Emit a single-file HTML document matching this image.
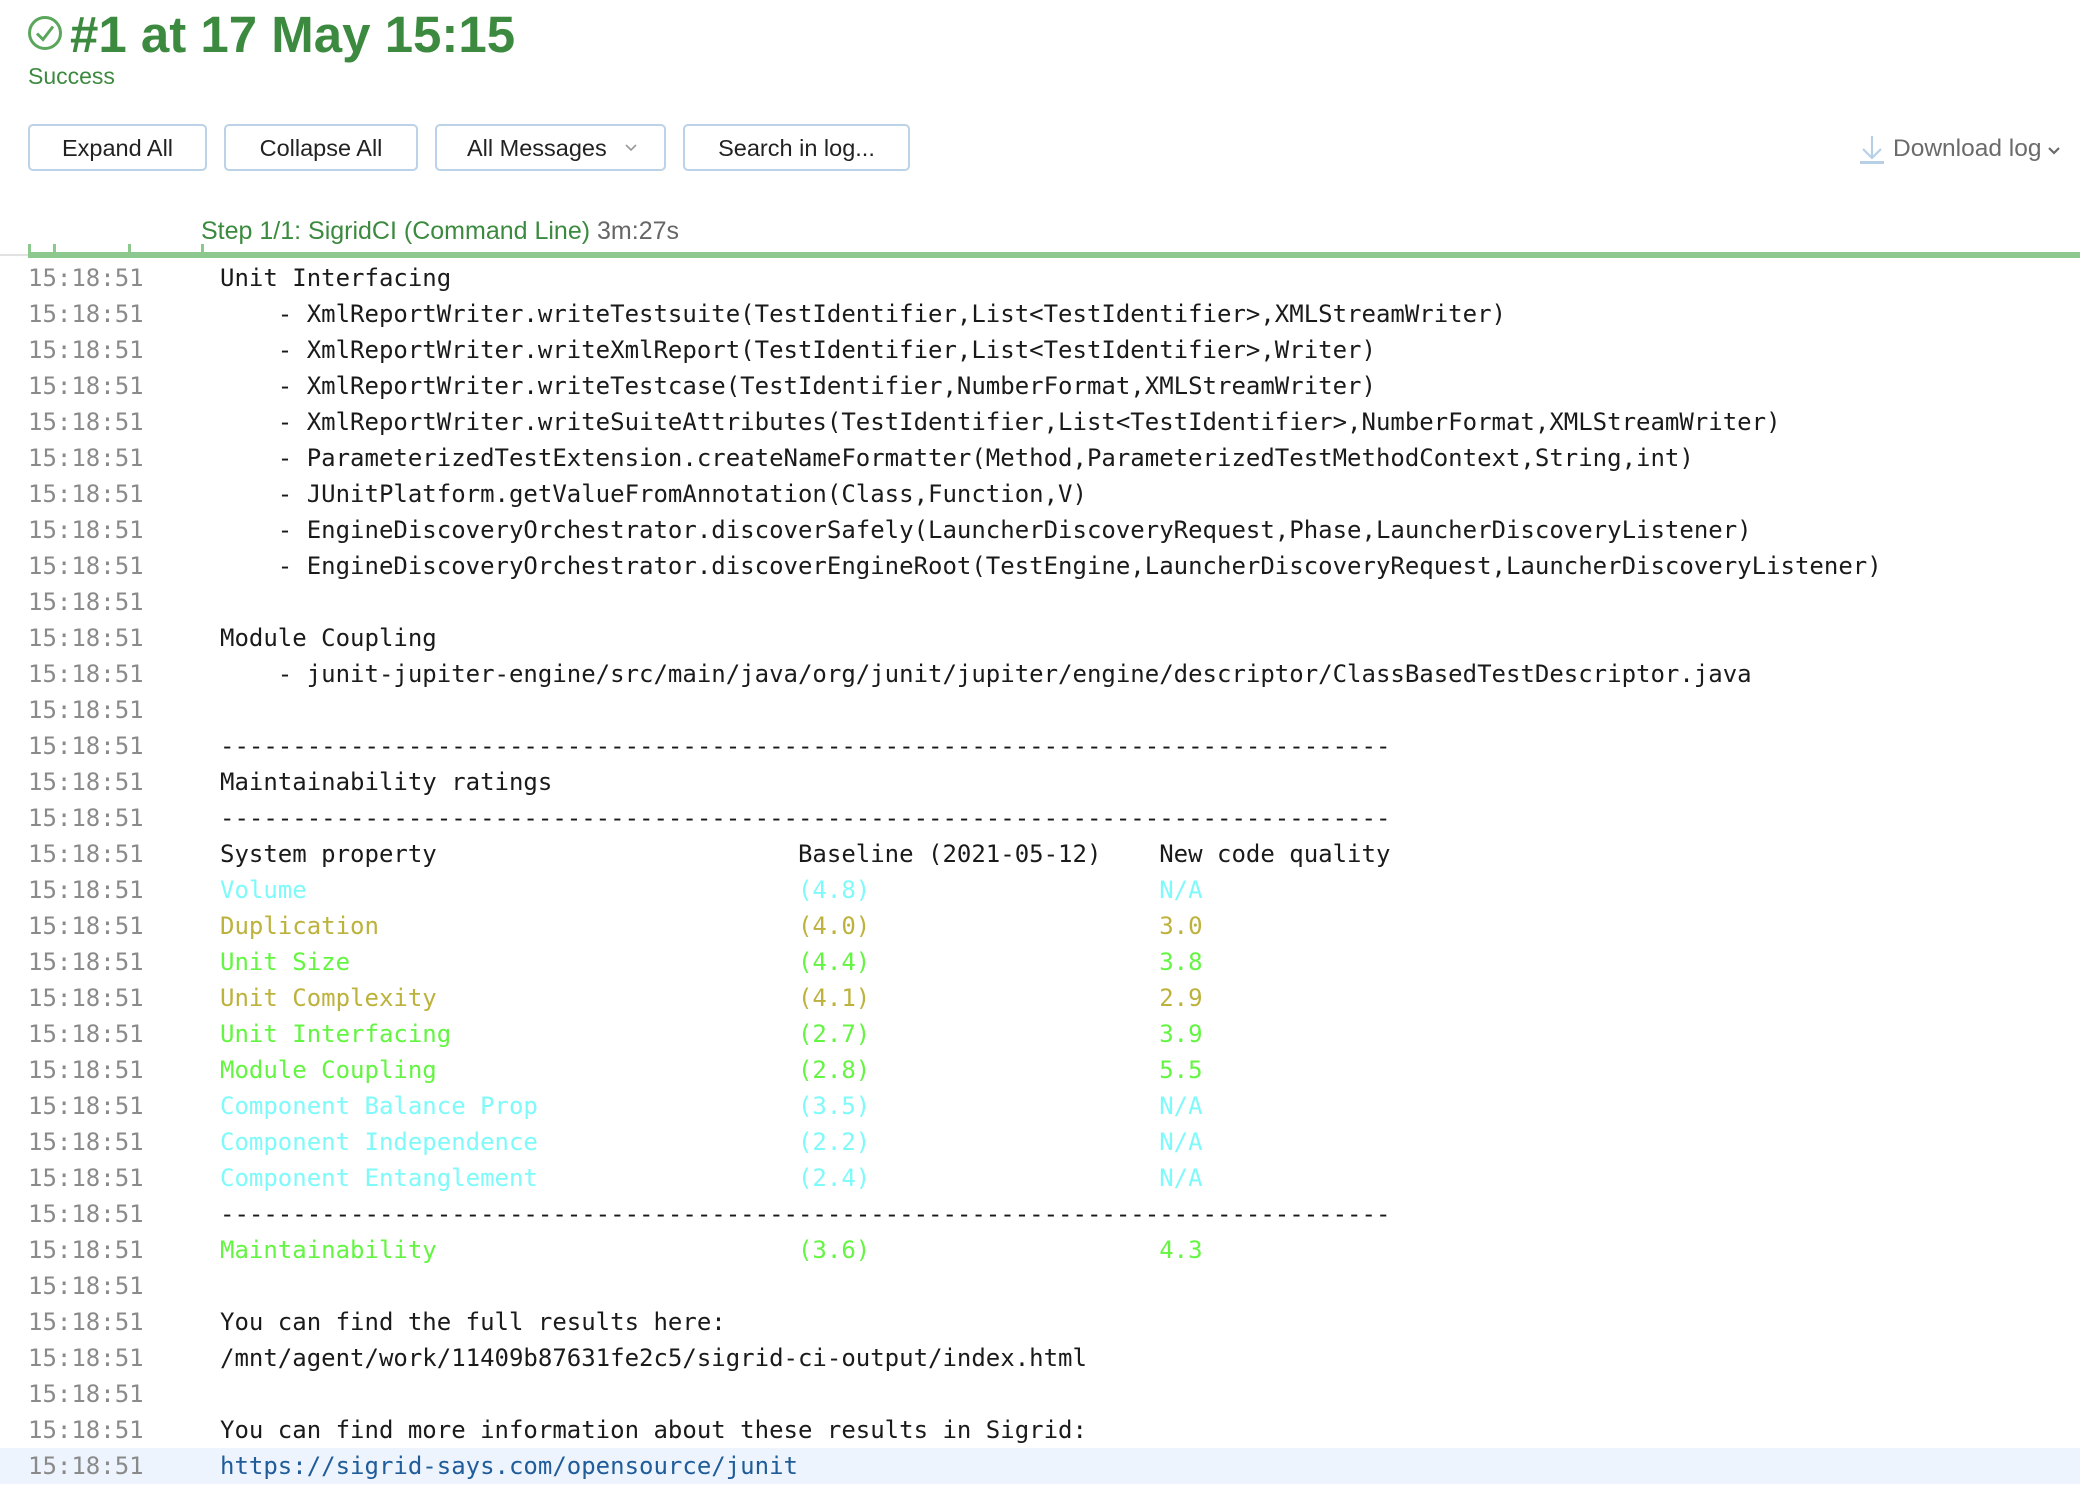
<!DOCTYPE html>
<html><head><meta charset="utf-8">
<style>
html,body{margin:0;padding:0;background:#fff;width:2080px;height:1488px;overflow:hidden;position:relative;font-family:"Liberation Sans",sans-serif}
.abs{position:absolute}
.title{left:70px;top:5px;font-size:51px;font-weight:bold;color:#3c8a3f;white-space:nowrap;line-height:60px}
.succ{left:28px;top:63px;font-size:23px;color:#3c8a3f}
.btn{position:absolute;top:124px;height:43px;border:2px solid #bcd2e6;border-radius:5px;box-sizing:content-box;font-size:23.5px;color:#222;line-height:45px;text-align:center}
.log{position:absolute;left:0;top:260px;width:2080px;font-family:"DejaVu Sans Mono","Liberation Mono",monospace;font-size:24px}
.r{height:36px;line-height:36px;white-space:pre;position:relative}
.t{position:absolute;left:28px;color:#8a8a8a}
.m{position:absolute;left:220px;color:#1a1a1a}
.c{color:#7ffafa}.o{color:#bdb23c}.g{color:#64f542}
.hl{background:#edf4fd}
a{color:#1f5c99;text-decoration:none}
</style></head><body>
<svg class="abs" style="left:27px;top:15px" width="36" height="36" viewBox="0 0 36 36"><circle cx="18" cy="18" r="15.5" fill="none" stroke="#5aa75c" stroke-width="3"/><path d="M10 18.5l6 6 10-13" fill="none" stroke="#5aa75c" stroke-width="3"/></svg>
<div class="abs title">#1 at 17 May 15:15</div>
<div class="abs succ">Success</div>
<div class="btn" style="left:28px;width:175px">Expand All</div>
<div class="btn" style="left:224px;width:190px">Collapse All</div>
<div class="btn" style="left:435px;width:227px;text-align:left"><span style="padding-left:30px">All Messages</span><svg style="position:absolute;left:188px;top:18px" width="12" height="8" viewBox="0 0 12 8"><path d="M1 1l5 5 5-5" fill="none" stroke="#999" stroke-width="1.6"/></svg></div>
<div class="btn" style="left:683px;width:223px">Search in log...</div>
<svg class="abs" style="left:1859px;top:135px" width="26" height="30" viewBox="0 0 26 30"><path d="M13 1v22M4 14l9 9 9-9" fill="none" stroke="#b7d0e8" stroke-width="2.2"/><rect x="1" y="26" width="24" height="3" fill="#b7d0e8"/></svg>
<div class="abs" style="left:1893px;top:134px;font-size:24.5px;color:#6b6b6b;line-height:30px">Download log</div>
<svg class="abs" style="left:2047px;top:146px" width="14" height="10" viewBox="0 0 14 10"><path d="M2 2l5 5 5-5" fill="none" stroke="#6b6b6b" stroke-width="2.2"/></svg>
<div class="abs" style="left:201px;top:217px;font-size:25px;color:#3c8a3f;white-space:nowrap;line-height:28px">Step 1/1: SigridCI (Command Line) <span style="color:#666">3m:27s</span></div>
<div class="abs" style="left:0;top:254px;width:28px;height:2px;background:#e2e2e2"></div>
<div class="abs" style="left:28px;top:252px;width:2052px;height:6px;background:#8dc98f"></div>
<div class="abs" style="left:28px;top:244px;width:3px;height:10px;background:#8dc98f"></div>
<div class="abs" style="left:53px;top:244px;width:3px;height:10px;background:#8dc98f"></div>
<div class="abs" style="left:128px;top:244px;width:3px;height:10px;background:#8dc98f"></div>
<div class="abs" style="left:201px;top:244px;width:3px;height:10px;background:#8dc98f"></div>
<div class="log">
<div class="r"><span class="t">15:18:51</span><span class="m">Unit Interfacing</span></div>
<div class="r"><span class="t">15:18:51</span><span class="m">    - XmlReportWriter.writeTestsuite(TestIdentifier,List&lt;TestIdentifier&gt;,XMLStreamWriter)</span></div>
<div class="r"><span class="t">15:18:51</span><span class="m">    - XmlReportWriter.writeXmlReport(TestIdentifier,List&lt;TestIdentifier&gt;,Writer)</span></div>
<div class="r"><span class="t">15:18:51</span><span class="m">    - XmlReportWriter.writeTestcase(TestIdentifier,NumberFormat,XMLStreamWriter)</span></div>
<div class="r"><span class="t">15:18:51</span><span class="m">    - XmlReportWriter.writeSuiteAttributes(TestIdentifier,List&lt;TestIdentifier&gt;,NumberFormat,XMLStreamWriter)</span></div>
<div class="r"><span class="t">15:18:51</span><span class="m">    - ParameterizedTestExtension.createNameFormatter(Method,ParameterizedTestMethodContext,String,int)</span></div>
<div class="r"><span class="t">15:18:51</span><span class="m">    - JUnitPlatform.getValueFromAnnotation(Class,Function,V)</span></div>
<div class="r"><span class="t">15:18:51</span><span class="m">    - EngineDiscoveryOrchestrator.discoverSafely(LauncherDiscoveryRequest,Phase,LauncherDiscoveryListener)</span></div>
<div class="r"><span class="t">15:18:51</span><span class="m">    - EngineDiscoveryOrchestrator.discoverEngineRoot(TestEngine,LauncherDiscoveryRequest,LauncherDiscoveryListener)</span></div>
<div class="r"><span class="t">15:18:51</span></div>
<div class="r"><span class="t">15:18:51</span><span class="m">Module Coupling</span></div>
<div class="r"><span class="t">15:18:51</span><span class="m">    - junit-jupiter-engine/src/main/java/org/junit/jupiter/engine/descriptor/ClassBasedTestDescriptor.java</span></div>
<div class="r"><span class="t">15:18:51</span></div>
<div class="r"><span class="t">15:18:51</span><span class="m">---------------------------------------------------------------------------------</span></div>
<div class="r"><span class="t">15:18:51</span><span class="m">Maintainability ratings</span></div>
<div class="r"><span class="t">15:18:51</span><span class="m">---------------------------------------------------------------------------------</span></div>
<div class="r"><span class="t">15:18:51</span><span class="m">System property                         Baseline (2021-05-12)    New code quality</span></div>
<div class="r"><span class="t">15:18:51</span><span class="m c">Volume                                  (4.8)                    N/A</span></div>
<div class="r"><span class="t">15:18:51</span><span class="m o">Duplication                             (4.0)                    3.0</span></div>
<div class="r"><span class="t">15:18:51</span><span class="m g">Unit Size                               (4.4)                    3.8</span></div>
<div class="r"><span class="t">15:18:51</span><span class="m o">Unit Complexity                         (4.1)                    2.9</span></div>
<div class="r"><span class="t">15:18:51</span><span class="m g">Unit Interfacing                        (2.7)                    3.9</span></div>
<div class="r"><span class="t">15:18:51</span><span class="m g">Module Coupling                         (2.8)                    5.5</span></div>
<div class="r"><span class="t">15:18:51</span><span class="m c">Component Balance Prop                  (3.5)                    N/A</span></div>
<div class="r"><span class="t">15:18:51</span><span class="m c">Component Independence                  (2.2)                    N/A</span></div>
<div class="r"><span class="t">15:18:51</span><span class="m c">Component Entanglement                  (2.4)                    N/A</span></div>
<div class="r"><span class="t">15:18:51</span><span class="m">---------------------------------------------------------------------------------</span></div>
<div class="r"><span class="t">15:18:51</span><span class="m g">Maintainability                         (3.6)                    4.3</span></div>
<div class="r"><span class="t">15:18:51</span></div>
<div class="r"><span class="t">15:18:51</span><span class="m">You can find the full results here:</span></div>
<div class="r"><span class="t">15:18:51</span><span class="m">/mnt/agent/work/11409b87631fe2c5/sigrid-ci-output/index.html</span></div>
<div class="r"><span class="t">15:18:51</span></div>
<div class="r"><span class="t">15:18:51</span><span class="m">You can find more information about these results in Sigrid:</span></div>
<div class="r hl"><span class="t">15:18:51</span><span class="m"><a>https://sigrid-says.com/opensource/junit</a></span></div>
</div>
</body></html>
